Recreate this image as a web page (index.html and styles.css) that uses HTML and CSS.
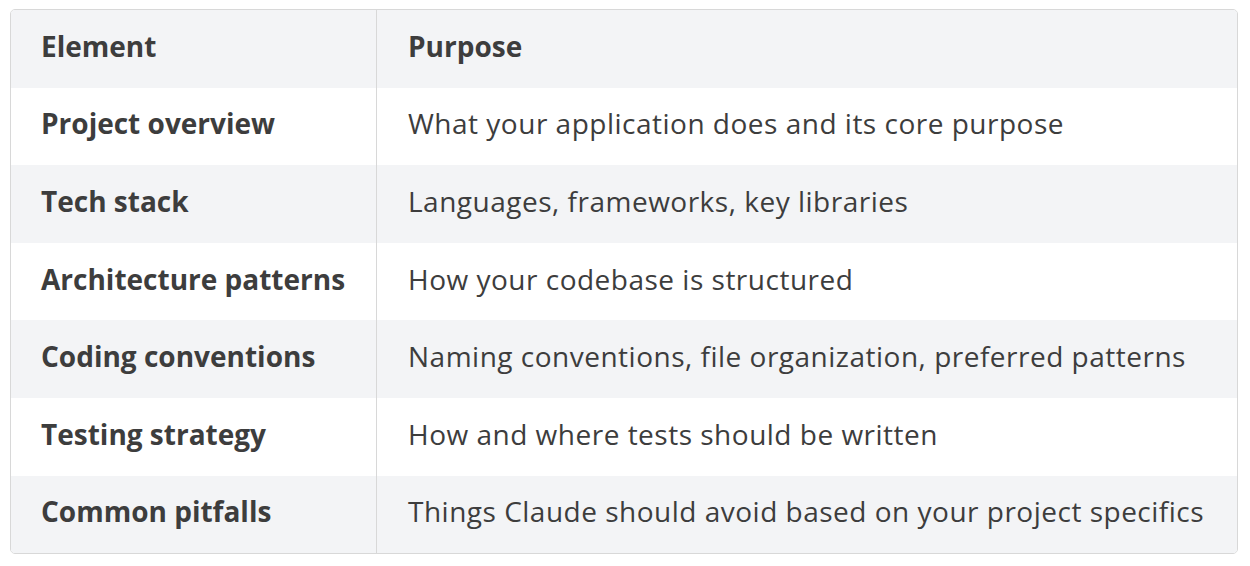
FILE: index.html
```html
<!DOCTYPE html>
<html lang="en">
<head>
<meta charset="utf-8">
<link rel="stylesheet" href="styles.css">
</head>
<body>
<div class="wrap">
<table class="tbl">
  <thead>
    <tr><th class="c1">Element</th><th class="c2">Purpose</th></tr>
  </thead>
  <tbody>
    <tr><td class="c1">Project overview</td><td class="c2">What your application does and its core purpose</td></tr>
    <tr><td class="c1">Tech stack</td><td class="c2">Languages, frameworks, key libraries</td></tr>
    <tr><td class="c1">Architecture patterns</td><td class="c2">How your codebase is structured</td></tr>
    <tr><td class="c1">Coding conventions</td><td class="c2">Naming conventions, file organization, preferred patterns</td></tr>
    <tr><td class="c1">Testing strategy</td><td class="c2">How and where tests should be written</td></tr>
    <tr><td class="c1">Common pitfalls</td><td class="c2">Things Claude should avoid based on your project specifics</td></tr>
  </tbody>
</table>
</div>
</body>
</html>
```
FILE: styles.css
```css
html, body { margin: 0; padding: 0; background: #ffffff; }
.wrap { padding: 9px 12px 0 10px; }
.tbl {
  width: 1228px;
  border-collapse: separate;
  border-spacing: 0;
  border: 1.5px solid #d8d8d8;
  border-radius: 5px;
  overflow: hidden;
  font-family: "Open Sans", Lato, sans-serif;
  color: #3d3d3d;
  font-size: 28px;
}
.tbl th, .tbl td {
  height: 77.6px;
  padding: 0 0 6px 30px;
  text-align: left;
  vertical-align: middle;
  box-sizing: border-box;
}
.tbl th { font-weight: 700; background: #f3f4f6; }
.tbl td.c1 { font-weight: 700; }
.tbl td.c2 { font-weight: 400; letter-spacing: 0.5px; }
.c1 { width: 366px; border-right: 1.5px solid #d8d8d8; }
.tbl th.c2, .tbl td.c2 { padding-left: 31px; }
.tbl tbody tr:nth-child(even) td { background: #f3f4f6; }
```
